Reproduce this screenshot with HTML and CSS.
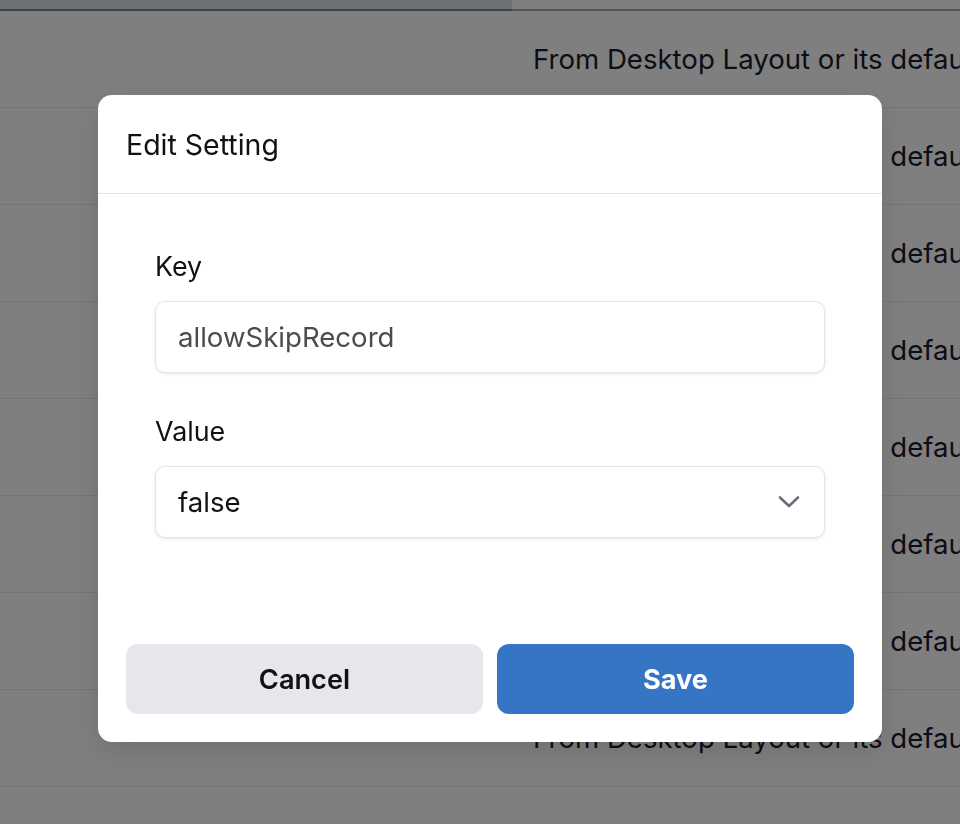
FILE: index.html
```html
<!DOCTYPE html>
<html lang="en">
<head>
    <meta charset="UTF-8">
    <meta name="viewport" content="width=device-width, initial-scale=1.0">
    <title>Settings</title>
    <link rel="stylesheet" href="styles.css">
</head>
<body>
    <div class="page">
        <div class="tabs">
            <div class="tab active"></div>
            <div class="tab"></div>
        </div>

        <div class="settings-list">
            <div class="setting-row"><span class="source">From Desktop Layout or its default</span></div>
            <div class="setting-row"><span class="source">From Desktop Layout or its default</span></div>
            <div class="setting-row"><span class="source">From Desktop Layout or its default</span></div>
            <div class="setting-row"><span class="source">From Desktop Layout or its default</span></div>
            <div class="setting-row"><span class="source">From Desktop Layout or its default</span></div>
            <div class="setting-row"><span class="source">From Desktop Layout or its default</span></div>
            <div class="setting-row"><span class="source">From Desktop Layout or its default</span></div>
            <div class="setting-row"><span class="source">From Desktop Layout or its default</span></div>
            <div class="setting-row"><span class="source">From Desktop Layout or its default</span></div>
        </div>
    </div>

    <!-- modal over the settings list -->
    <div class="overlay">
        <div class="modal">
            <div class="modal-header">Edit Setting</div>

            <div class="modal-body">
                <div class="field">
                    <label class="field-label" for="key">Key</label>
                    <input id="key" class="text-input" type="text" value="allowSkipRecord" readonly>
                </div>

                <div class="field">
                    <label class="field-label" for="value">Value</label>
                    <div class="select-wrap">
                        <select id="value" class="select-input">
                            <option>false</option>
                            <option>true</option>
                        </select>
                        <svg class="chevron" width="22" height="14" viewBox="0 0 22 14" fill="none">
                            <path d="M2 2.5 L11 11 L20 2.5" stroke="#6b6e78" stroke-width="2.6" stroke-linecap="round" stroke-linejoin="round"/>
                        </svg>
                    </div>
                </div>
            </div>

            <div class="modal-footer">
                <button class="button button-cancel">Cancel</button>
                <button class="button button-save">Save</button>
            </div>
        </div>
    </div>
</body>
</html>
```

FILE: styles.css
```css
:root {
    --text-color: #111114;
    --border-light: #e4e4e9;
    --row-border: #ececf0;
    --primary-color: #3575c4;
    --cancel-bg: #e6e7eb;
}

* {
    box-sizing: border-box;
    margin: 0;
    padding: 0;
}

body {
    font-family: Inter, 'Noto Sans', sans-serif;
    color: var(--text-color);
    background: #ffffff;
    overflow: hidden;
    height: 100vh;
}

.page {
    width: 100%;
    height: 100vh;
    overflow: hidden;
}

.tabs {
    display: flex;
    height: 11px;
}

.tab {
    flex: 1;
    border-bottom: 2px solid #a0a8b6;
}

.tab.active {
    flex: 0 0 512px;
    background: #dfe3ea;
    border-bottom-color: #74809a;
}

.setting-row {
    height: 97px;
    border-bottom: 1px solid var(--row-border);
    padding-left: 533px;
    display: flex;
    align-items: center;
    white-space: nowrap;
    overflow: hidden;
}

.source {
    font-size: 27.6px;
    color: #1a1a2e;
}

.overlay {
    position: fixed;
    inset: 0;
    background: rgba(0, 0, 0, 0.5);
}

.modal {
    position: absolute;
    left: 98px;
    top: 95px;
    width: 784px;
    background: #ffffff;
    border-radius: 14px;
    box-shadow: 0 10px 30px rgba(0, 0, 0, 0.12);
}

.modal-header {
    height: 99px;
    padding: 0 28px;
    display: flex;
    align-items: center;
    font-size: 28.5px;
    border-bottom: 1px solid var(--border-light);
}

.modal-body {
    padding: 56px 57px 78px;
    display: flex;
    flex-direction: column;
    gap: 42px;
}

.field {
    display: flex;
    flex-direction: column;
    gap: 19px;
}

.field-label {
    font-size: 26.8px;
    line-height: 32px;
}

.text-input,
.select-input {
    width: 100%;
    height: 72px;
    border: 1px solid var(--border-light);
    border-radius: 10px;
    box-shadow: 0 1px 3px rgba(0, 0, 0, 0.1);
    background: #ffffff;
    padding: 0 22px;
    font-family: inherit;
    font-size: 27.6px;
    outline: none;
}

.text-input {
    color: #4b4b50;
}

.select-wrap {
    position: relative;
}

.select-input {
    appearance: none;
    -webkit-appearance: none;
    color: var(--text-color);
}

.chevron {
    position: absolute;
    right: 25px;
    top: 29px;
    pointer-events: none;
}

.modal-footer {
    display: flex;
    gap: 14px;
    padding: 28px;
}

.button {
    flex: 1;
    height: 70px;
    border: none;
    border-radius: 12px;
    font-family: inherit;
    font-size: 27.2px;
    cursor: pointer;
}

.button-cancel {
    background: var(--cancel-bg);
    color: var(--text-color);
    font-weight: 600;
}

.button-save {
    background: var(--primary-color);
    color: #ffffff;
    font-weight: 700;
}
```
